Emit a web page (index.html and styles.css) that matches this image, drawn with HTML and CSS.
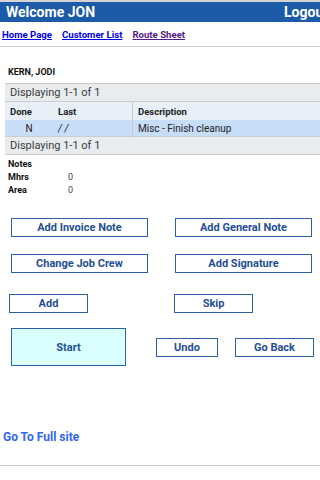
FILE: index.html
```html
<!DOCTYPE html>
<html lang="en">
<head>
    <meta charset="UTF-8">
    <meta name="viewport" content="width=device-width, initial-scale=1.0">
    <title>Job Detail</title>
    <link rel="stylesheet" href="styles.css">
</head>
<body>

    <div class="header">
        <span class="welcome">Welcome JON</span>
        <span class="logout">Logout</span>
    </div>

    <div class="nav">
        <a href="#">Home Page</a>
        <a href="#">Customer List</a>
        <a href="#" class="visited">Route Sheet</a>
    </div>

    <div class="customer">KERN, JODI</div>

    <table class="grid">
        <tr class="pager"><td colspan="3">Displaying 1-1 of 1</td></tr>
        <tr class="head">
            <th class="col-done">Done</th>
            <th class="col-last">Last</th>
            <th class="col-desc">Description</th>
        </tr>
        <tr class="row">
            <td class="col-done center">N</td>
            <td class="col-last"><i>/ /</i></td>
            <td class="col-desc">Misc - Finish cleanup</td>
        </tr>
        <tr class="pager"><td colspan="3">Displaying 1-1 of 1</td></tr>
    </table>

    <div class="info">
        <div class="info-row"><b>Notes</b></div>
        <div class="info-row"><b>Mhrs</b><span>0</span></div>
        <div class="info-row"><b>Area</b><span>0</span></div>
    </div>

    <div class="actions">
        <div class="btn-row">
            <button class="btn wide">Add Invoice Note</button>
            <button class="btn wide">Add General Note</button>
        </div>
        <div class="btn-row">
            <button class="btn wide">Change Job Crew</button>
            <button class="btn wide">Add Signature</button>
        </div>
        <div class="btn-row small-row">
            <button class="btn small">Add</button>
            <button class="btn small">Skip</button>
        </div>
        <div class="btn-row last-row">
            <button class="btn start">Start</button>
            <button class="btn undo">Undo</button>
            <button class="btn back">Go Back</button>
        </div>
    </div>

    <a href="#" class="full-site">Go To Full site</a>
    <div class="footer-line"></div>

</body>
</html>
```

FILE: styles.css
```css
body {
    margin: 0;
    font-family: Roboto, 'Liberation Sans', sans-serif;
    color: #222;
    background: #fff;
    overflow: hidden;
}

.header {
    border-top: 2px solid #d4d4d4;
    background: #1c5ba7;
    height: 20px;
    display: flex;
    justify-content: space-between;
    align-items: center;
    padding-left: 6px;
    white-space: nowrap;
    overflow: hidden;
}

.welcome, .logout {
    color: #fff;
    font-weight: bold;
    font-size: 14px;
}

.logout {
    margin-right: -8px;
}

.nav {
    height: 24px;
    padding-left: 2px;
    display: flex;
    align-items: center;
    gap: 10px;
    border-bottom: 1px solid #cfcfcf;
}

.nav a {
    font-size: 9.6px;
    font-weight: bold;
    color: #0000ee;
}

.nav a.visited {
    color: #551a8b;
}

.customer {
    margin: 20px 0 0 8px;
    font-size: 9px;
    font-weight: bold;
    color: #111;
}

.grid {
    margin: 6px 0 0 5px;
    width: 320px;
    border-collapse: collapse;
    font-size: 10px;
}

.grid td, .grid th {
    padding: 0 5px;
    text-align: left;
    white-space: nowrap;
}

.pager td {
    height: 17px;
    background: #e9ecef;
    border-top: 1px solid #cdcdcd;
    border-bottom: 1px solid #cdcdcd;
    font-size: 11px;
    color: #3a3a3a;
}

.head th {
    height: 18px;
    background: #e8eff8;
    font-size: 9.5px;
    color: #222;
}

.row td {
    height: 16px;
    background: #c8ddf8;
    color: #222;
}

.col-done {
    width: 38px;
}

.col-last {
    width: 69px;
    border-right: 1px solid #c6c9cc;
}

.center {
    text-align: center !important;
}

.info {
    margin: 2px 0 0 8px;
    font-size: 9px;
}

.info-row {
    height: 13px;
    display: flex;
    align-items: center;
}

.info-row b {
    width: 60px;
    color: #111;
}

.info-row span {
    color: #444;
}

.actions {
    margin-top: 22px;
}

.btn-row {
    display: flex;
    align-items: flex-start;
    margin-bottom: 17px;
}

.btn {
    font-family: Roboto, 'Liberation Sans', sans-serif;
    font-weight: bold;
    font-size: 11px;
    color: #1f4f96;
    background: #fff;
    border: 1px solid #2d60a8;
    padding: 0;
    height: 19px;
    cursor: pointer;
}

.wide {
    width: 137px;
    margin-left: 11px;
}

.wide + .wide {
    margin-left: 27px;
}

.small-row {
    margin-top: 21px;
    margin-bottom: 15px;
}

.small {
    width: 79px;
    margin-left: 9px;
}

.small + .small {
    margin-left: 86px;
}

.last-row {
    align-items: center;
}

.start {
    width: 115px;
    height: 38px;
    margin-left: 11px;
    background: #d9ffff;
}

.undo {
    width: 62px;
    margin-left: 30px;
}

.back {
    width: 79px;
    margin-left: 17px;
}

.full-site {
    display: block;
    margin: 64px 0 0 3px;
    font-size: 12px;
    font-weight: bold;
    color: #3366ee;
    text-decoration: none;
}

.footer-line {
    margin-top: 21px;
    border-top: 1px solid #cccccc;
}
```
